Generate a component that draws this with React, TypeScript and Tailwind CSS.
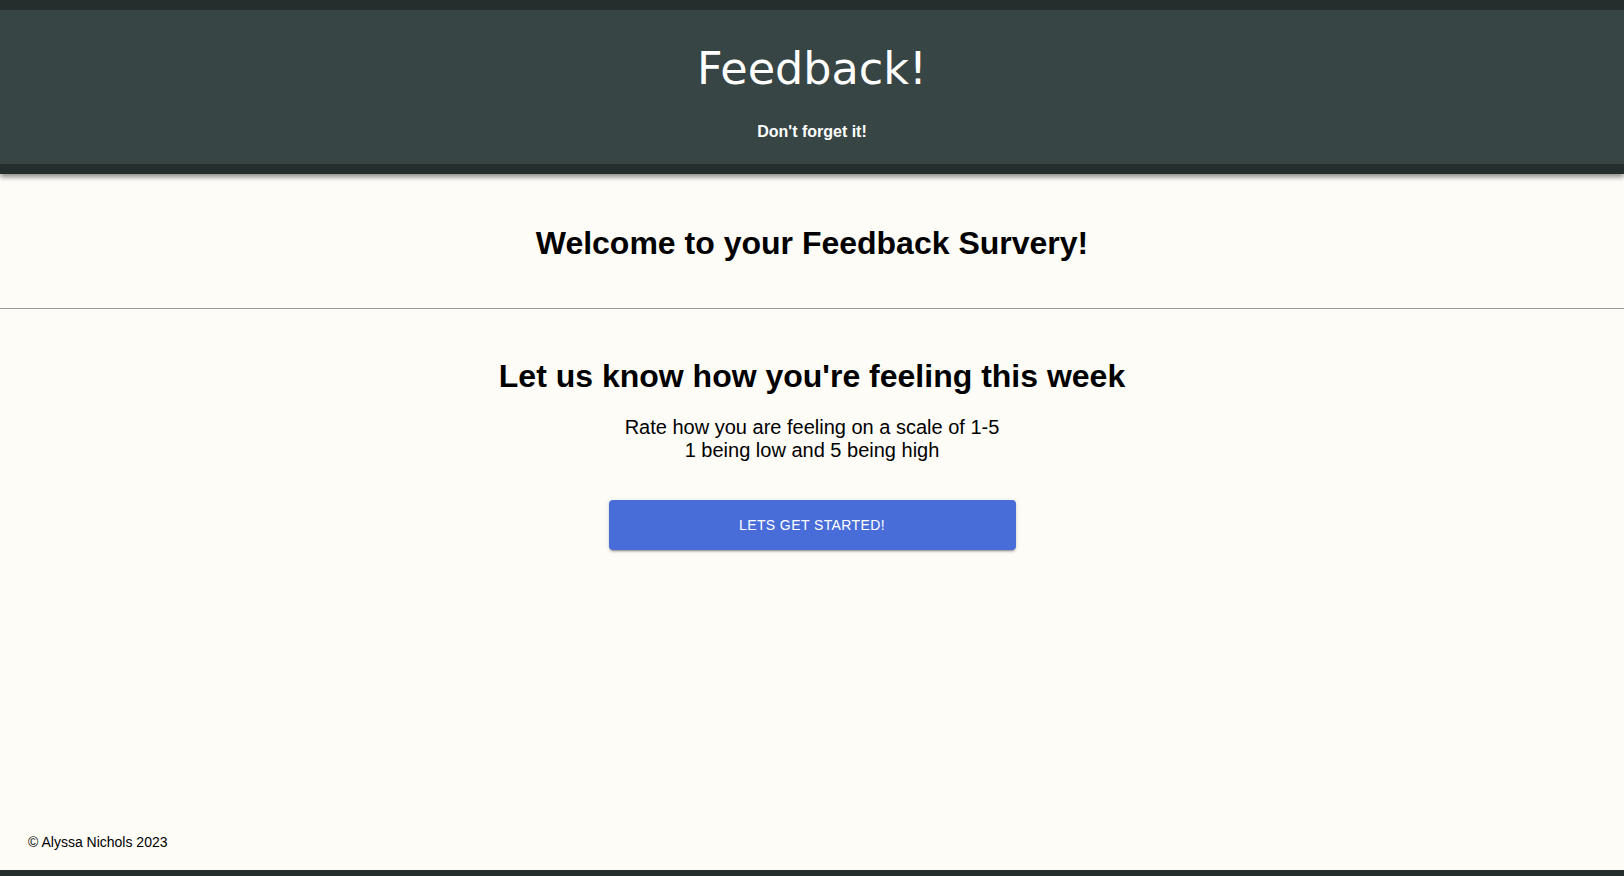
export default function App() {
  return (
    <div className="flex h-screen flex-col bg-[#fdfcf7] font-['Liberation_Sans',Arial,sans-serif] text-black">
      <header className="relative z-10 border-y-[10px] border-[#262e2d] bg-[#374544] pt-[33px] pb-[22px] text-center text-white shadow-[0_3px_5px_rgba(0,0,0,0.45)]">
        <h1 className="font-['DejaVu_Sans',Verdana,sans-serif] text-[44.5px] leading-[52px]">Feedback!</h1>
        <p className="mt-[27px] text-base font-bold leading-5">Don't forget it!</p>
      </header>

      <main className="flex-1">
        <section className="pt-[51px] pb-[47px] text-center">
          <h2 className="text-[32px] font-bold leading-9">Welcome to your Feedback Survery!</h2>
        </section>
        <hr className="border-0 border-t border-[#9a9a9a]" />
        <section className="flex flex-col items-center pt-[49px] text-center">
          <h2 className="text-[32px] font-bold leading-9">Let us know how you're feeling this week</h2>
          <p className="mt-[22px] text-[20px] leading-[23px]">
            Rate how you are feeling on a scale of 1-5
            <br />
            1 being low and 5 being high
          </p>
          <button className="mt-[38px] h-[50px] w-[407px] rounded bg-[#486dd9] text-sm font-medium tracking-[0.4px] text-white uppercase shadow-[0_3px_1px_-2px_rgba(0,0,0,0.2),0_2px_2px_0_rgba(0,0,0,0.14),0_1px_5px_0_rgba(0,0,0,0.12)]">
            Lets get started!
          </button>
        </section>
      </main>

      <footer>
        <p className="px-[28px] pb-5 text-sm leading-4">© Alyssa Nichols 2023</p>
        <div className="h-[6px] bg-[#262e2d]" />
      </footer>
    </div>
  );
}
